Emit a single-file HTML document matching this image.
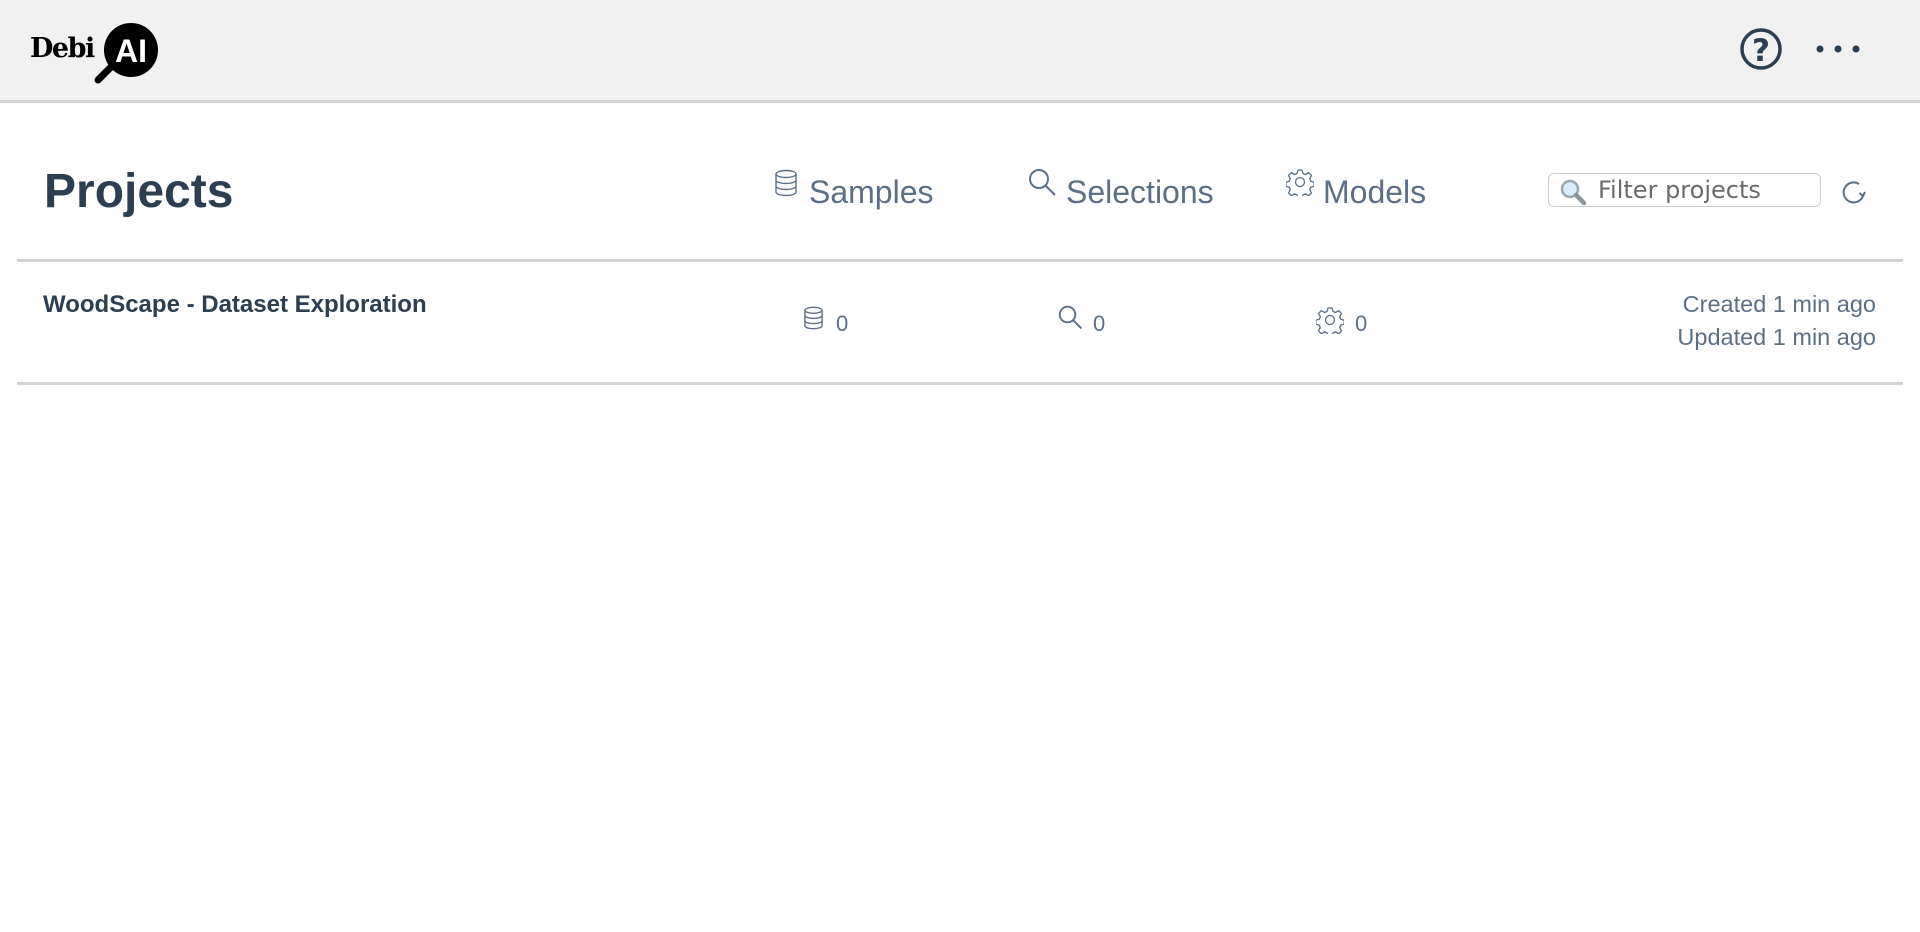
<!DOCTYPE html>
<html><head><meta charset="utf-8"><style>
*{margin:0;padding:0;box-sizing:border-box}
body{width:1920px;height:932px;background:#fff;font-family:"Liberation Sans",sans-serif;position:relative;overflow:hidden;color:#2c3e50}
.hdr{position:absolute;left:0;top:0;width:1920px;height:103px;background:#f1f1f1;border-bottom:3px solid #d4d4d4}
.abs{position:absolute;white-space:nowrap}
.nav{font-size:32px;color:#5c6f84}
.line{position:absolute;left:17px;width:1886px;height:3px;background:#d4d4d4}
.cnt{font-size:22px;color:#5c6f84}
.date{font-size:23.5px;color:#5c6f84;text-align:right;right:44px}
</style></head><body>
<div class="hdr"></div>
<div class="abs" style="left:30px;top:33px;font-family:'DejaVu Serif',serif;font-weight:bold;font-size:27px;color:#000;letter-spacing:-1.5px">Debi</div>
<svg class="abs" style="left:90px;top:20px" width="72" height="66" viewBox="90 20 72 66">
<line x1="112" y1="66" x2="98" y2="80" stroke="#000" stroke-width="7" stroke-linecap="round"/>
<circle cx="131" cy="50" r="27" fill="#000"/>
<text x="131" y="62" text-anchor="middle" font-family="Liberation Sans,sans-serif" font-weight="bold" font-size="32" fill="#fff">AI</text>
</svg>
<svg class="abs" style="left:1739px;top:27px" width="44" height="44" viewBox="0 0 44 44">
<circle cx="22" cy="22" r="19" fill="none" stroke="#2c3e50" stroke-width="3.5"/>
<text x="22" y="34" text-anchor="middle" font-family="DejaVu Sans,sans-serif" font-weight="bold" font-size="31" fill="#2c3e50">?</text>
</svg>
<svg class="abs" style="left:1812px;top:43px" width="52" height="12"><circle cx="8" cy="6" r="3.5" fill="#2c3e50"/><circle cx="26" cy="6" r="3.5" fill="#2c3e50"/><circle cx="44" cy="6" r="3.5" fill="#2c3e50"/></svg>

<div class="abs" style="left:44px;top:164px;font-size:48px;font-weight:bold;color:#2c3e50">Projects</div>

<svg class="abs" style="left:774px;top:169px" width="24" height="28" viewBox="0 0 24 28" fill="none" stroke="#5c6f84" stroke-width="1.4">
<ellipse cx="12" cy="5" rx="10" ry="3.5"/><path d="M2 5v18c0 2 4.5 3.5 10 3.5s10-1.5 10-3.5V5M2 11c0 2 4.5 3.5 10 3.5s10-1.5 10-3.5M2 17c0 2 4.5 3.5 10 3.5s10-1.5 10-3.5"/></svg>
<div class="abs nav" style="left:809px;top:174px">Samples</div>
<svg class="abs" style="left:1028px;top:168px" width="30" height="30" viewBox="0 0 30 30" fill="none" stroke="#5c6f84" stroke-width="2"><circle cx="11" cy="11" r="9"/><line x1="17.5" y1="17.5" x2="27" y2="27"/></svg>
<div class="abs nav" style="left:1066px;top:174px">Selections</div>
<svg class="abs" style="left:1286px;top:168px" width="28" height="28" viewBox="-14 -14 28 28" fill="none" stroke="#5c6f84" stroke-width="1.3">
<path d="M-2-12h4l1 3.5 2.5 1 3.2-1.8 2.8 2.8-1.8 3.2 1 2.5 3.5 1v4l-3.5 1-1 2.5 1.8 3.2-2.8 2.8-3.2-1.8-2.5 1-1 3.5h-4l-1-3.5-2.5-1-3.2 1.8-2.8-2.8 1.8-3.2-1-2.5-3.5-1v-4l3.5-1 1-2.5-1.8-3.2 2.8-2.8 3.2 1.8 2.5-1z"/><circle r="4.5"/></svg>
<div class="abs nav" style="left:1323px;top:174px">Models</div>

<div class="abs" style="left:1548px;top:173px;width:273px;height:34px;border:1px solid #ccc;border-radius:6px;background:#fff"></div>
<svg class="abs" style="left:1559px;top:178px" width="28" height="28" viewBox="0 0 28 28"><circle cx="11" cy="11" r="8" fill="#d9ecfa" stroke="#9aa6ae" stroke-width="2.5"/><line x1="17" y1="17" x2="25" y2="25" stroke="#8a959c" stroke-width="4.5" stroke-linecap="round"/></svg>
<div class="abs" style="left:1598px;top:176px;color:#6a6a6a;font-family:'DejaVu Sans',sans-serif;font-size:24px">Filter projects</div>
<svg class="abs" style="left:1841px;top:179px" width="28" height="28" viewBox="0 0 28 28" fill="none" stroke="#5c6f84" stroke-width="2"><path d="M22 17A10 10 0 1 1 18 5"/><path d="M24 13l-2 4-3.5-3" /></svg>

<div class="line" style="top:259px"></div>
<div class="abs" style="left:43px;top:291px;font-size:24px;font-weight:bold;color:#2c3e50">WoodScape - Dataset Exploration</div>
<svg class="abs" style="left:803px;top:306px" width="21" height="24" viewBox="0 0 24 28" fill="none" stroke="#5c6f84" stroke-width="1.6">
<ellipse cx="12" cy="5" rx="10" ry="3.5"/><path d="M2 5v18c0 2 4.5 3.5 10 3.5s10-1.5 10-3.5V5M2 11c0 2 4.5 3.5 10 3.5s10-1.5 10-3.5M2 17c0 2 4.5 3.5 10 3.5s10-1.5 10-3.5"/></svg>
<div class="abs cnt" style="left:836px;top:311px">0</div>
<svg class="abs" style="left:1058px;top:305px" width="26" height="26" viewBox="0 0 30 30" fill="none" stroke="#5c6f84" stroke-width="2.2"><circle cx="11" cy="11" r="9"/><line x1="17.5" y1="17.5" x2="27" y2="27"/></svg>
<div class="abs cnt" style="left:1093px;top:311px">0</div>
<svg class="abs" style="left:1316px;top:306px" width="28" height="28" viewBox="-14 -14 28 28" fill="none" stroke="#5c6f84" stroke-width="1.3">
<path d="M-2-12h4l1 3.5 2.5 1 3.2-1.8 2.8 2.8-1.8 3.2 1 2.5 3.5 1v4l-3.5 1-1 2.5 1.8 3.2-2.8 2.8-3.2-1.8-2.5 1-1 3.5h-4l-1-3.5-2.5-1-3.2 1.8-2.8-2.8 1.8-3.2-1-2.5-3.5-1v-4l3.5-1 1-2.5-1.8-3.2 2.8-2.8 3.2 1.8 2.5-1z"/><circle r="4.5"/></svg>
<div class="abs cnt" style="left:1355px;top:311px">0</div>
<div class="abs date" style="top:291px">Created 1 min ago</div>
<div class="abs date" style="top:324px">Updated 1 min ago</div>
<div class="line" style="top:382px"></div>
</body></html>
